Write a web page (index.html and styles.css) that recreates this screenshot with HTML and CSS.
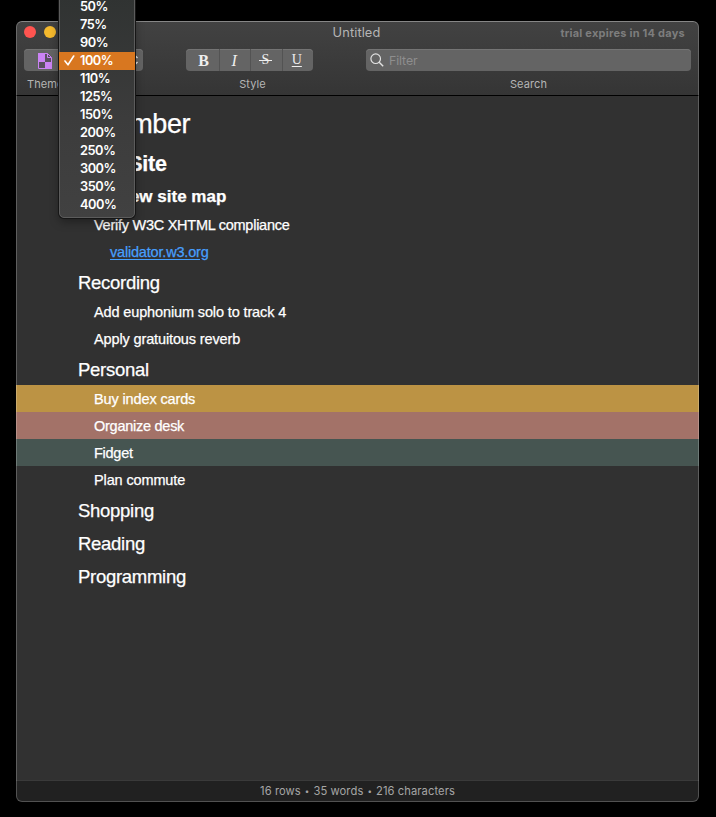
FILE: index.html
```html
<!DOCTYPE html>
<html lang="en">
<head>
<meta charset="utf-8">
<title>Untitled</title>
<link rel="stylesheet" href="styles.css">
</head>
<body>
<main class="window">
  <header class="titlebar">
    <div class="title-row">
      <div class="lights"><i class="light close"></i><i class="light minimize"></i></div>
      <span class="title">Untitled</span>
      <span class="trial">trial expires in 14 days</span>
    </div>
    <div class="tools">
      <div class="tool theme">
        <div class="button">
          <svg width="14" height="16" viewBox="0 0 14 16"><path fill="#5a5060" d="M0 0h10l4 4v12H0z"/><path fill="#cb83f4" d="M0 0h7v9H0zM7 9h7v7H7z"/><path d="M.5 .5h9l4 4v11H.5z" fill="none" stroke="#cb83f4"/><path d="M9.500 .5v4h4" fill="none" stroke="#cb83f4"/></svg>
        </div>
        <span class="label">Theme</span>
      </div>
      <div class="tool zoom">
        <div class="button stepper">
          <svg width="8" height="14" viewBox="0 0 8 14"><path d="M1.500 5L4 2.500 6.500 5M1.500 9L4 11.500 6.500 9" fill="none" stroke="#eee" stroke-width="1.300"/></svg>
        </div>
      </div>
      <div class="tool style">
        <div class="button segments">
          <span class="bold">B</span><span class="italic">I</span><span class="strike">S</span><span class="under">U</span>
        </div>
        <span class="label">Style</span>
      </div>
      <div class="tool search">
        <div class="button field">
          <svg width="14" height="14" viewBox="0 0 14 14"><circle cx="5.700" cy="5.700" r="4.800" fill="none" stroke="#e2e2e2" stroke-width="1.200"/><path d="M9.200 9.200l4 4" stroke="#e2e2e2" stroke-width="1.400"/></svg>
          <span>Filter</span>
        </div>
        <span class="label">Search</span>
      </div>
    </div>
  </header>
  <section class="outline">
    <div class="row h0"><span>September</span></div>
    <div class="row h1"><span>Web Site</span></div>
    <div class="row h2"><span>Review site map</span></div>
    <div class="row"><span>Verify W3C XHTML compliance</span></div>
    <div class="row note"><a>validator.w3.org</a></div>
    <div class="row group"><span>Recording</span></div>
    <div class="row loose"><span>Add euphonium solo to track 4</span></div>
    <div class="row loose"><span>Apply gratuitous reverb</span></div>
    <div class="row group"><span>Personal</span></div>
    <div class="row gold loose"><span>Buy index cards</span></div>
    <div class="row rose"><span>Organize desk</span></div>
    <div class="row teal"><span>Fidget</span></div>
    <div class="row loose"><span>Plan commute</span></div>
    <div class="row group"><span>Shopping</span></div>
    <div class="row group"><span>Reading</span></div>
    <div class="row group"><span>Programming</span></div>
  </section>
  <footer class="status"><span>16 rows</span><b>•</b><span>35 words</span><b>•</b><span>216 characters</span></footer>
</main>
<ul class="menu">
  <li>50%</li>
  <li>75%</li>
  <li>90%</li>
  <li class="selected"><svg width="11" height="11" viewBox="0 0 11 11"><path d="M1 6l3 3.800L9.700 1" fill="none" stroke="#fff" stroke-width="1.600" stroke-linecap="round" stroke-linejoin="round"/></svg>100%</li>
  <li>110%</li>
  <li>125%</li>
  <li>150%</li>
  <li>200%</li>
  <li>250%</li>
  <li>300%</li>
  <li>350%</li>
  <li>400%</li>
</ul>
</body>
</html>
```
FILE: styles.css
```css
* { box-sizing: border-box; }
html, body { height: 100%; margin: 0; }
body {
  background: #000;
  padding: 21px 17px 15px 16px;
  overflow: hidden;
  font-family: Inter, "Liberation Sans", sans-serif;
}
.window {
  position: relative;
  height: 781px;
  display: flex;
  flex-direction: column;
  background: #313131;
  border-radius: 6px;
  overflow: hidden;
}
.window::after {
  content: "";
  position: absolute;
  inset: 0;
  border: 1px solid rgba(255, 255, 255, .22);
  border-top-color: rgba(255, 255, 255, .36);
  border-radius: 6px;
}
.titlebar {
  height: 75px;
  flex: none;
  background: linear-gradient(#424242, #353535);
  border-bottom: 1px solid #000;
}
.title-row {
  height: 22px;
  display: grid;
  grid-template-columns: 1fr auto 1fr;
  align-items: center;
  padding: 0 14px 0 8px;
}
.lights { display: flex; gap: 8px; }
.light { width: 12px; height: 12px; border-radius: 50%; }
.close { background: #ff5450; }
.minimize { background: #f5b92d; }
.title { font-size: 12.800px; color: #b5b5b5; margin-left: 4px; letter-spacing: .1px; }
.trial { justify-self: end; padding-top: 1px; font-size: 11px; font-weight: 700; color: #7d7d7d; letter-spacing: .24px; }
.tools { display: flex; padding: 6px 8px 0; }
.tool { display: flex; flex-direction: column; align-items: center; gap: 4px; }
.button {
  height: 22px;
  width: 100%;
  display: flex;
  align-items: center;
  border-radius: 4px;
  background: #646464;
  box-shadow: inset 0 1px #747474;
}
.label { font-size: 11px; line-height: 18px; color: #b5b5b5; letter-spacing: .1px; }
.theme { width: 42px; }
.theme .button { padding: 2px 0 0 14px; }
.theme .label { align-self: flex-start; margin-left: 3px; }
.zoom { width: 67px; margin-left: 10px; }
.stepper { justify-content: flex-end; padding-right: 4px; }
.style { width: 127px; margin-left: 43px; }
.style .label { margin-left: 6px; }
.segments span {
  flex: 1;
  height: 22px;
  font: 16px/23px "Liberation Serif", serif;
  color: #eee;
  text-align: center;
  border-right: 1px solid #535353;
}
.segments span:last-child { border: 0; }
.segments .bold { flex: 0 0 34px; padding-left: 2px; font-weight: 700; }
.segments .italic { padding-right: 2px; font-style: italic; }
.segments .strike, .segments .under { padding-right: 2px; font-size: 14px; line-height: 22px; }
.segments .strike { position: relative; }
.segments .strike::after {
  content: "";
  position: absolute;
  left: 8px;
  top: 11px;
  width: 13px;
  height: 1px;
  background: #eee;
}
.segments .under { text-decoration: underline; text-underline-offset: 2px; }
.search { width: 325px; margin-left: 53px; }
.field { gap: 5px; padding-left: 4px; font-size: 12.300px; color: #8e8e8e; letter-spacing: -.1px; }
.outline {
  flex: 1;
  font-family: "Liberation Sans", Arial, sans-serif;
  color: #fff;
}
.row {
  height: 27px;
  padding-left: 78px;
  display: flex;
  align-items: center;
  font-size: 14.500px;
  letter-spacing: -.26px;
  white-space: pre;
  -webkit-text-stroke: .25px currentColor;
}
.loose { letter-spacing: -.13px; }
.h0 { height: 50px; padding: 6px 0 0 46px; font-size: 27px; letter-spacing: -.45px; }
.h1 { height: 36px; padding: 0 0 0 62px; font-size: 21.500px; font-weight: 700; letter-spacing: -.2px; }
.h2 { height: 29px; font-size: 17px; font-weight: 700; letter-spacing: 0; }
.note { padding-left: 94px; letter-spacing: -.19px; }
.note a { color: #479ffd; text-decoration: underline; text-underline-offset: 2px; }
.group { height: 33px; padding: 2px 0 0 62px; font-size: 18.500px; letter-spacing: -.28px; }
.gold { background: #bc9344; }
.rose { background: #a37268; }
.teal { background: #465551; }
.status {
  height: 22px;
  flex: none;
  display: flex;
  justify-content: center;
  align-items: center;
  gap: 4px;
  padding-bottom: 1px;
  background: #212121;
  border-top: 1px solid #3a3a3a;
  color: #a5a5a5;
  font-size: 11.200px;
  letter-spacing: .08px;
}
.status b { font-size: 8px; font-weight: 400; }
.menu {
  position: absolute;
  left: 59px;
  top: -3px;
  width: 76px;
  height: 221px;
  margin: 0;
  padding: 0;
  list-style: none;
  background: linear-gradient(#303332, #3c3c3c 55%, #414141);
  border: 1px solid #5c5c5c;
  border-radius: 0 0 5px 5px;
  box-shadow: 0 0 0 1px #161616, 0 4px 10px rgba(0, 0, 0, .35);
  color: #fff;
  font-size: 12.800px;
  font-weight: 600;
  letter-spacing: -.5px;
}
.menu li { position: relative; height: 18px; line-height: 17px; padding-left: 20px; }
.menu .selected { background: #d87720; margin: 0 -1px; padding-left: 21px; }
.menu svg { position: absolute; left: 5px; top: 3px; }
```
